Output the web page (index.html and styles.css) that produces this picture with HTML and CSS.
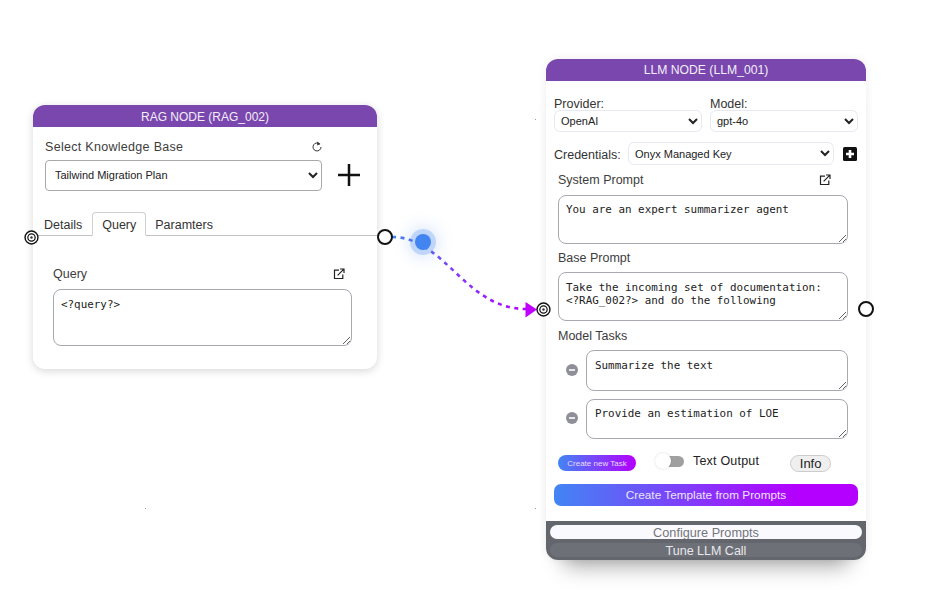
FILE: index.html
```html
<!DOCTYPE html>
<html lang="en">
<head>
  <meta charset="UTF-8" />
  <title>Node canvas</title>
  <link rel="stylesheet" href="styles.css">
</head>
<body>
  <div class="canvas">
    <span class="speck speck-a"></span>
    <span class="speck speck-b"></span>
    <span class="speck speck-c"></span>
    <span class="speck speck-d"></span>

    <!-- RAG node -->
    <div class="node rag-node">
      <div class="node-title rag-title">RAG NODE (RAG_002)</div>
      <div class="rag-top">
        <div class="kb-label-row">
          <span class="kb-label">Select Knowledge Base</span>
          <svg class="refresh-icon" viewBox="0 0 12 12"><path d="M8.9 3.2A4 4 0 1 0 10 6" fill="none" stroke="#333" stroke-width="1"/><path d="M6.2 0.6 9.4 3 6.2 4.6Z" fill="#333"/></svg>
        </div>
        <div class="kb-select-row">
          <select class="kb-select"><option>Tailwind Migration Plan</option></select>
          <svg class="big-plus" viewBox="0 0 22 22"><path d="M11 0V22M0 11H22" stroke="#111" stroke-width="2.5"/></svg>
        </div>
      </div>
      <div class="tabs">
        <span class="tab tab-first">Details</span>
        <span class="tab tab-active">Query</span>
        <span class="tab">Paramters</span>
      </div>
      <div class="rag-body">
        <div class="field-head">
          <span>Query</span>
          <svg class="open-icon" viewBox="0 0 12 12"><path d="M6 2.2H1.5V10.5H9.8V6.5" fill="none" stroke="#222" stroke-width="1.2"/><path d="M4.6 7.4 10.6 1.4M7 1H11V5" fill="none" stroke="#222" stroke-width="1.2"/></svg>
        </div>
        <textarea class="box query-box">&lt;?query?&gt;</textarea>
      </div>
    </div>

    <!-- LLM node -->
    <div class="node llm-node">
      <div class="node-title">LLM NODE (LLM_001)</div>
      <div class="llm-body">
        <div class="picker-row">
          <label class="picker">Provider:
            <select class="soft-select picker-select"><option>OpenAI</option></select>
          </label>
          <label class="picker">Model:
            <select class="soft-select picker-select"><option>gpt-4o</option></select>
          </label>
        </div>
        <div class="cred-row">
          <span>Credentials:</span>
          <select class="soft-select cred-select"><option>Onyx Managed Key</option></select>
          <svg class="plus-square" viewBox="0 0 14 14"><rect width="14" height="14" rx="1.5" fill="#111"/><path d="M7 3V11M3 7H11" stroke="#fff" stroke-width="2.6"/></svg>
        </div>
        <div class="prompts">
          <div class="field-head sys-head">
            <span>System Prompt</span>
            <svg class="open-icon" viewBox="0 0 12 12"><path d="M6 2.2H1.5V10.5H9.8V6.5" fill="none" stroke="#222" stroke-width="1.2"/><path d="M4.6 7.4 10.6 1.4M7 1H11V5" fill="none" stroke="#222" stroke-width="1.2"/></svg>
          </div>
          <textarea class="box prompt-box">You are an expert summarizer agent</textarea>
          <div class="field-head">Base Prompt</div>
          <textarea class="box prompt-box prompt-box-base">Take the incoming set of documentation: &lt;?RAG_002?&gt; and do the following</textarea>
          <div class="field-head">Model Tasks</div>
          <div class="task">
            <span class="minus"></span>
            <textarea class="box task-box task-box-1">Summarize the text</textarea>
          </div>
          <div class="task">
            <span class="minus"></span>
            <textarea class="box task-box task-box-2">Provide an estimation of LOE</textarea>
          </div>
        </div>
        <div class="action-row">
          <button class="new-task">Create new Task</button>
          <span class="toggle"><span class="knob"></span></span>
          <span class="toggle-label">Text Output</span>
          <button class="info-btn">Info</button>
        </div>
        <button class="template-btn">Create Template from Prompts</button>
      </div>
      <div class="node-foot">
        <div class="foot-pill foot-on">Configure Prompts</div>
        <div class="foot-pill">Tune LLM Call</div>
      </div>
    </div>

    <!-- connection between the nodes -->
    <svg class="wire" width="935" height="600" viewBox="0 0 935 600">
      <defs>
        <linearGradient id="wireGrad" gradientUnits="userSpaceOnUse" x1="392" y1="237" x2="526" y2="310">
          <stop offset="0" stop-color="#4285f4"/>
          <stop offset="0.55" stop-color="#8a30f6"/>
          <stop offset="1" stop-color="#b400ff"/>
        </linearGradient>
      </defs>
      <path d="M392 237C445 237 465 309 526 309" fill="none" stroke="url(#wireGrad)" stroke-width="2.6" stroke-dasharray="4 4.5"/>
      <path d="M525.5 302 537 309.5 525.5 317.5Z" fill="#c000ff"/>
    </svg>
    <span class="pulse"></span>

    <svg class="port port-in rag-in" viewBox="0 0 16 16"><circle cx="8" cy="8" r="6.9" fill="#fff" stroke="#111" stroke-width="1.5"/><circle cx="8" cy="8" r="3.9" fill="none" stroke="#111" stroke-width="1.3"/><circle cx="8" cy="8" r="1.3" fill="#333"/></svg>
    <span class="port port-out rag-out"></span>
    <svg class="port port-in llm-in" viewBox="0 0 16 16"><circle cx="8" cy="8" r="6.9" fill="#fff" stroke="#111" stroke-width="1.5"/><circle cx="8" cy="8" r="3.9" fill="none" stroke="#111" stroke-width="1.3"/><circle cx="8" cy="8" r="1.3" fill="#333"/></svg>
    <span class="port port-out llm-out"></span>
  </div>
</body>
</html>
```

FILE: styles.css
```css
* {
  margin: 0;
  padding: 0;
  box-sizing: border-box;
}

body {
  font-family: "Liberation Sans", Arial, sans-serif;
  background: #fff;
  color: #333;
  overflow: hidden;
}

.canvas {
  position: relative;
  width: 935px;
  height: 600px;
  overflow: hidden;
}

.speck {
  position: absolute;
  width: 1px;
  height: 1px;
  background: #999;
}

.speck-a { left: 535px; top: 119px; }
.speck-b { left: 145px; top: 508px; }
.speck-c { left: 535px; top: 508px; }
.speck-d { left: 860px; top: 119px; }

.node {
  position: absolute;
  background: #fff;
  border-radius: 12px;
  display: flex;
  flex-direction: column;
}

.rag-node {
  left: 33px;
  top: 105px;
  width: 344px;
  height: 264px;
  box-shadow: 0 2px 8px rgba(0, 0, 0, 0.16);
}

.llm-node {
  left: 546px;
  top: 59px;
  width: 320px;
  height: 501px;
  box-shadow: 0 0 10px rgba(0, 0, 0, 0.07), 0 24px 20px -18px rgba(0, 0, 0, 0.35);
}

.node-title {
  flex: none;
  height: 22px;
  line-height: 23px;
  background: #7a47ae;
  border-radius: 12px 12px 0 0;
  color: #f3eef8;
  font-size: 12.2px;
  text-align: center;
}

.rag-title {
  line-height: 25px;
  font-size: 12px;
}

.rag-top {
  padding: 11px 55px 0 12px;
}

.kb-label-row {
  display: flex;
  justify-content: space-between;
  align-items: center;
  height: 18px;
}

.kb-label {
  font-size: 12.5px;
  letter-spacing: 0.3px;
  color: #3d3d3d;
}

.refresh-icon {
  width: 12px;
  height: 12px;
  margin-right: -1px;
}

.kb-select-row {
  position: relative;
  margin-top: 4px;
}

.kb-select {
  display: block;
  width: 277px;
  height: 31px;
  padding: 0 0 2px 5px;
  border: 1px solid #a9a9a9;
  border-radius: 4px;
  background: #fff;
  color: #222;
  font: 11px "Liberation Sans", Arial, sans-serif;
}

.big-plus {
  position: absolute;
  left: 293px;
  top: 4px;
  width: 22px;
  height: 22px;
}

.tabs {
  display: flex;
  align-items: flex-end;
  height: 24px;
  margin-top: 21px;
  padding-left: 2px;
  border-bottom: 1px solid #c4c4c4;
  font-size: 12.5px;
  color: #333;
}

.tab {
  height: 24px;
  line-height: 29px;
  padding: 0 9px;
}

.tab-first {
  margin-right: 1px;
}

.tab-active {
  border: 1px solid #d0d0d0;
  border-bottom: 1px solid #fff;
  border-radius: 4px 4px 0 0;
  margin-bottom: -1px;
  background: #fff;
  line-height: 25px;
}

.rag-body {
  padding: 30px 25px 0 20px;
}

.field-head {
  display: flex;
  justify-content: space-between;
  align-items: center;
  height: 16px;
  font-size: 12.5px;
  color: #3d3d3d;
}

.open-icon {
  width: 12px;
  height: 12px;
  margin-right: 7px;
}

.box {
  display: block;
  width: 100%;
  border: 1px solid #a8a8b0;
  border-radius: 8px;
  padding: 7px 8px;
  font: 10.9px/13px "DejaVu Sans Mono", "Liberation Mono", monospace;
  color: #222;
  background: #fff;
  outline: none;
}

.query-box {
  height: 57px;
  margin-top: 7px;
  padding: 8px 7px;
}

.llm-body {
  flex: 1;
  padding: 16px 8px 0;
}

.picker-row {
  display: flex;
  gap: 8px;
}

.picker {
  flex: 1;
  font-size: 12.5px;
  line-height: 14px;
  color: #333;
}

.soft-select {
  display: block;
  width: 100%;
  height: 22px;
  padding-left: 2px;
  border: 1px solid #e6e8f2;
  border-radius: 6px;
  background: #fff;
  color: #222;
  font: 11px "Liberation Sans", Arial, sans-serif;
}

.picker-select {
  margin-top: -1px;
}

.cred-row {
  display: flex;
  align-items: center;
  margin-top: 10px;
  font-size: 12.5px;
  color: #333;
}

.cred-row span {
  width: 74px;
  padding-top: 3px;
}

.cred-select {
  width: 206px;
  height: 23px;
}

.plus-square {
  width: 14px;
  height: 14px;
  margin-left: 9px;
}

.prompts {
  padding: 7px 10px 0 4px;
}

.sys-head {
  padding-right: 10px;
}

.prompt-box {
  height: 49px;
  margin: 7px 0 6px;
  padding-left: 7px;
}

.prompt-box-base {
  margin: 6px 0 7px;
  padding-top: 8px;
}

.task {
  display: flex;
  align-items: center;
  gap: 8px;
  margin-top: 6px;
  padding-left: 8px;
}

.task + .task {
  margin-top: 8px;
}

.minus {
  position: relative;
  flex: none;
  width: 12px;
  height: 12px;
  margin-top: -2px;
  border-radius: 50%;
  background: #8f8f99;
}

.minus::after {
  content: "";
  position: absolute;
  left: 3px;
  top: 5px;
  width: 6px;
  height: 2px;
  background: #e8e8ec;
}

.task-box {
  flex: 1;
  height: 41px;
  width: auto;
}

.task-box-1 {
  padding-top: 8px;
}

.task-box-2 {
  height: 40px;
}

.action-row {
  display: flex;
  align-items: center;
  height: 18px;
  margin-top: 15px;
  padding-left: 4px;
}

.new-task {
  width: 78px;
  height: 16px;
  border: 0;
  border-radius: 8px;
  background: linear-gradient(90deg, #4285f4, #b400ff);
  color: #e9dcff;
  font: 8px "Liberation Sans", Arial, sans-serif;
}

.toggle {
  position: relative;
  width: 28px;
  height: 11px;
  margin: -3px 0 0 20px;
  border-radius: 6px;
  background: #a0a0a0;
}

.knob {
  position: absolute;
  left: -1px;
  top: -3px;
  width: 16px;
  height: 16px;
  border-radius: 50%;
  background: #fff;
  box-shadow: 0 0 2px rgba(0, 0, 0, 0.2);
}

.toggle-label {
  margin: -4px 0 0 9px;
  font-size: 12.5px;
  color: #222;
  letter-spacing: 0.2px;
}

.info-btn {
  width: 41px;
  height: 17px;
  margin-left: 31px;
  border: 1px solid #ccc;
  border-radius: 9px;
  background: #efefef;
  color: #222;
  font: 13px "Liberation Sans", Arial, sans-serif;
}

.template-btn {
  display: block;
  width: 304px;
  height: 22px;
  margin-top: 12px;
  border: 0;
  border-radius: 7px;
  background: linear-gradient(90deg, #4285f4, #b400ff 80%);
  color: #ece4ff;
  font: 11.8px "Liberation Sans", Arial, sans-serif;
}

.node-foot {
  flex: none;
  height: 39px;
  padding: 4px 4px 0;
  background: #63666d;
  border-radius: 0 0 12px 12px;
}

.foot-pill {
  height: 14px;
  margin-bottom: 4px;
  border-radius: 7px;
  background: #6e7078;
  color: #e8e8ec;
  font-size: 12.5px;
  line-height: 16px;
  text-align: center;
  overflow: hidden;
}

.foot-on {
  background: #fafafe;
  color: #74757c;
  font-size: 12.7px;
}

.wire {
  position: absolute;
  left: 0;
  top: 0;
  pointer-events: none;
}

.pulse {
  position: absolute;
  left: 415px;
  top: 234px;
  width: 16px;
  height: 16px;
  border-radius: 50%;
  background: #4285f0;
  box-shadow: 0 0 0 5px rgba(66, 133, 240, 0.25), 0 0 16px 8px rgba(66, 133, 240, 0.18);
}

.port {
  position: absolute;
  display: block;
}

.port-in {
  width: 15px;
  height: 15px;
}

.port-out {
  width: 16px;
  height: 16px;
  border: 2px solid #111;
  border-radius: 50%;
  background: #fff;
}

.rag-in { left: 24px; top: 230px; }
.rag-out { left: 377px; top: 229px; }
.llm-in { left: 536px; top: 302px; }
.llm-out { left: 858px; top: 301px; }
```
